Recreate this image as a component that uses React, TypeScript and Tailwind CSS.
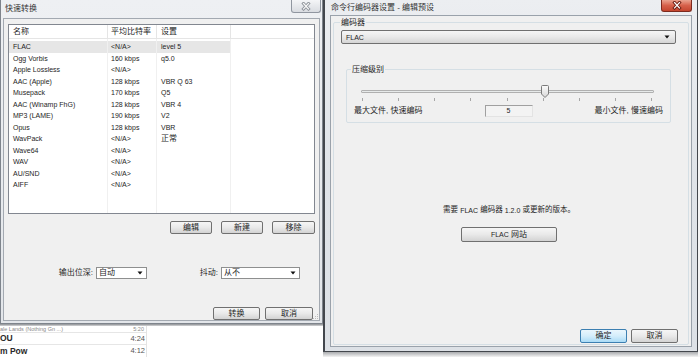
import React from "react";

const rows: [string, string, string][] = [
  ["FLAC", "<N/A>", "level 5"],
  ["Ogg Vorbis", "160 kbps", "q5.0"],
  ["Apple Lossless", "<N/A>", ""],
  ["AAC (Apple)", "128 kbps", "VBR Q 63"],
  ["Musepack", "170 kbps", "Q5"],
  ["AAC (Winamp FhG)", "128 kbps", "VBR 4"],
  ["MP3 (LAME)", "190 kbps", "V2"],
  ["Opus", "128 kbps", "VBR"],
  ["WavPack", "<N/A>", "正常"],
  ["Wave64", "<N/A>", ""],
  ["WAV", "<N/A>", ""],
  ["AU/SND", "<N/A>", ""],
  ["AIFF", "<N/A>", ""],
];

function Arrow() {
  return (
    <svg width="6" height="4" viewBox="0 0 6 4">
      <path d="M0.5 0.5h5L3 3.5z" fill="#111" />
    </svg>
  );
}

function XIcon({ active }: { active: boolean }) {
  return (
    <svg width="10" height="9" viewBox="0 0 10 9">
      <path d="M2.5 1.5l5 5.5M7.5 1.5l-5 5.5" stroke={active ? "#6b1c10" : "#8f949b"} strokeWidth="3" strokeLinecap="square" />
      <path d="M2.5 1.5l5 5.5M7.5 1.5l-5 5.5" stroke={active ? "#ffffff" : "#f8f8f8"} strokeWidth="1.2" strokeLinecap="square" />
    </svg>
  );
}

function Btn({ label, className }: { label: string; className: string }) {
  return (
    <div
      className={
        "flex items-center justify-center rounded-[2px] border border-[#707070] bg-linear-to-b from-[#f6f6f6] via-[#e9e9e9] to-[#d3d3d3] text-[8px] " +
        className
      }
    >
      {label}
    </div>
  );
}

function Select({ label, className }: { label: string; className: string }) {
  return (
    <div className={"flex items-center justify-between h-[12px] border border-[#8e8f8f] bg-white pl-[2px] pr-[3px] text-[8px] " + className}>
      <span>{label}</span>
      <Arrow />
    </div>
  );
}

function LeftWindow() {
  return (
    <div className="w-[323px] h-[327px] flex flex-col border-x border-b border-[#7e848c] bg-linear-to-b from-[#eef0f3] to-[#e3e6ea]">
      <div className="h-[18px] flex items-start justify-between pl-[4px] pr-[1px]">
        <span className="pt-[5px] text-[8px] text-[#333]">快速转换</span>
        <div className="w-[30px] h-[13px] flex items-center justify-center rounded-b-[3px] border-x border-b border-[#9096a0] bg-linear-to-b from-[#f4f5f7] to-[#d9dce1]">
          <XIcon active={false} />
        </div>
      </div>
      <div className="mx-[2px] mb-[2px] flex-1 flex flex-col border border-[#a3a9b1] bg-[#f0f0f0] pl-[4px] pr-[3px] relative">
        <div className="mt-[5px] w-[307px] h-[190px] flex flex-col border border-[#828790] bg-white">
          <div className="h-[14px] flex border-b border-[#e5e5e5] text-[8px]">
            <div className="w-[99px] pl-[4px] flex items-center border-r border-[#e5e5e5]">名称</div>
            <div className="w-[49px] pl-[3px] flex items-center border-r border-[#e5e5e5]">平均比特率</div>
            <div className="w-[74px] pl-[4px] flex items-center border-r border-[#e5e5e5]">设置</div>
            <div className="flex-1" />
          </div>
          <div className="flex-1 flex text-[7px]">
            <div className="w-[99px] pt-[2px] border-r border-[#f0f0f0]">
              {rows.map((r, i) => (
                <div key={i} className={"h-[11.5px] pl-[4px] flex items-center " + (i === 0 ? "bg-[#e6e6e6]" : "")}>
                  {r[0]}
                </div>
              ))}
            </div>
            <div className="w-[49px] pt-[2px] border-r border-[#f0f0f0]">
              {rows.map((r, i) => (
                <div key={i} className={"h-[11.5px] pl-[3px] flex items-center " + (i === 0 ? "bg-[#e6e6e6]" : "")}>
                  {r[1]}
                </div>
              ))}
            </div>
            <div className="w-[74px] pt-[2px] border-r border-[#f0f0f0]">
              {rows.map((r, i) => (
                <div
                  key={i}
                  className={"h-[11.5px] pl-[4px] flex items-center " + (i === 0 ? "bg-[#e6e6e6] " : "") + (r[2] === "正常" ? "text-[8px]" : "")}
                >
                  {r[2]}
                </div>
              ))}
            </div>
            <div className="flex-1" />
          </div>
        </div>
        <div className="mt-[7px] w-[307px] flex justify-end gap-[9px]">
          <Btn label="编辑" className="w-[42px] h-[13px]" />
          <Btn label="新建" className="w-[42px] h-[13px]" />
          <Btn label="移除" className="w-[43px] h-[13px]" />
        </div>
        <div className="mt-[33px] flex text-[8px]">
          <div className="w-[139px] flex items-center justify-end gap-[3px]">
            <span>输出位深:</span>
            <Select label="自动" className="w-[51px]" />
          </div>
          <div className="w-[153px] flex items-center justify-end gap-[3px]">
            <span>抖动:</span>
            <Select label="从不" className="w-[79px]" />
          </div>
        </div>
        <div className="mt-[28px] w-[305px] flex justify-end gap-[5px]">
          <Btn label="转换" className="w-[47px] h-[13px]" />
          <Btn label="取消" className="w-[48px] h-[13px]" />
        </div>
        <div className="absolute right-[1px] bottom-[1px] w-[5px] h-[5px] grid grid-cols-3 gap-[0.5px] opacity-60">
          <span />
          <span />
          <span className="bg-[#999]" />
          <span />
          <span className="bg-[#999]" />
          <span className="bg-[#999]" />
          <span className="bg-[#999]" />
          <span className="bg-[#999]" />
          <span className="bg-[#999]" />
        </div>
      </div>
    </div>
  );
}

function BgList() {
  return (
    <div className="flex-1 flex flex-col bg-white">
      <div className="h-[2px] bg-linear-to-b from-[#8a8d91] to-[#d6d7d9]" />
      <div className="w-[147px] flex flex-col border-r border-[#e3e3e3]">
        <div className="h-[7px] flex items-center justify-between pr-[2px] border-b border-[#e6e6e6] text-[5.5px] leading-[6px] text-[#8a8a8a]">
          <span>ale Lands (Nothing Gn ...)</span>
          <span>5:20</span>
        </div>
        <div className="h-[12px] flex items-center justify-between pr-[1px] border-b border-[#e6e6e6]">
          <span className="text-[8.5px] font-semibold text-[#2a2a2a]">OU</span>
          <span className="text-[7.5px] text-[#555]">4:24</span>
        </div>
        <div className="h-[12px] flex items-center justify-between pr-[1px]">
          <span className="text-[8.5px] font-semibold text-[#2a2a2a]">m Pow</span>
          <span className="text-[7.5px] text-[#555]">4:12</span>
        </div>
      </div>
    </div>
  );
}

function RightWindow() {
  const ticks = [0, 1, 2, 3, 4, 5, 6, 7, 8];
  return (
    <div className="w-[375px] h-[352px] flex flex-col border-l-2 border-r border-b border-[#43474d] bg-linear-to-b from-[#eceef1] via-[#dfe3e8] to-[#dde1e6]">
      <div className="h-[15px] flex items-start justify-between pl-[6px] pr-[5px]">
        <span className="pt-[4px] text-[8px] text-[#333]">命令行编码器设置 - 编辑预设</span>
        <div className="w-[31px] h-[12px] flex items-center justify-center rounded-b-[3px] border-x border-b border-[#7d2a1e] bg-linear-to-b from-[#e9a28f] via-[#d6604a] to-[#c4452e]">
          <XIcon active={true} />
        </div>
      </div>
      <div className="mx-[5px] mb-[4px] flex-1 flex flex-col border border-[#9aa2ab] bg-[#f0f0f0] px-[2px] pb-[1px]">
        <div className="mt-[6px] flex-1 flex flex-col border border-[#d5dfe5] rounded-[2px] relative">
          <span className="absolute -top-[5px] left-[6px] px-[1px] bg-[#f0f0f0] text-[8px] leading-[9px]">编码器</span>
          <div className="mt-[7px] ml-[7px] w-[335px] h-[14px] flex items-center justify-between rounded-[2px] border border-[#707070] bg-linear-to-b from-[#f6f6f6] via-[#e9e9e9] to-[#d5d5d5] pl-[4px] pr-[5px] text-[7px]">
            <span>FLAC</span>
            <Arrow />
          </div>
          <div className="mt-[25px] ml-[12px] w-[325px] h-[54px] flex flex-col border border-[#d5dfe5] rounded-[2px] relative">
            <span className="absolute -top-[5px] left-[4px] px-[1px] bg-[#f0f0f0] text-[8px] leading-[9px]">压缩级别</span>
            <div className="mt-[20px] ml-[14px] w-[293px] h-[3px] border border-[#b0b0b0] bg-[#e7eaea] rounded-[1px] relative">
              <svg className="absolute left-[179px] -top-[6px]" width="8" height="13" viewBox="0 0 8 13">
                <defs>
                  <linearGradient id="tg" x1="0" y1="0" x2="0" y2="1">
                    <stop offset="0" stopColor="#fbfbfb" />
                    <stop offset="1" stopColor="#d8d8d8" />
                  </linearGradient>
                </defs>
                <path d="M1.5 0.5h5a1 1 0 0 1 1 1v7.5l-3.5 3.5l-3.5-3.5v-7.5a1 1 0 0 1 1-1z" fill="url(#tg)" stroke="#7b7b7b" />
              </svg>
            </div>
            <div className="mt-[5px] ml-[15px] w-[290px] h-[3px] flex justify-between">
              {ticks.map((t) => (
                <span key={t} className="w-[1px] h-[3px] bg-[#a6a6a6]" />
              ))}
            </div>
            <div className="mt-[3px] mx-[7px] h-[13px] flex items-center justify-between text-[8px]">
              <span>最大文件, 快速编码</span>
              <div className="w-[48px] h-[12px] flex items-center justify-center border border-[#a0a0a0] border-r-[#e3e3e3] border-b-[#e3e3e3] bg-[#f3f3f3] text-[7px]">
                5
              </div>
              <span>最小文件, 慢速编码</span>
            </div>
          </div>
          <div className="mt-[82px] pr-[4px] flex flex-col items-center">
            <span className="h-[10px] flex items-center text-[7.5px]">
              需要&nbsp;<span className="text-[7px]">FLAC</span>&nbsp;编码器&nbsp;<span className="text-[7px]">1.2.0</span>&nbsp;或更新的版本。
            </span>
            <div className="mt-[12px] w-[96px] h-[15px] flex items-center justify-center rounded-[2px] border border-[#707070] bg-linear-to-b from-[#f6f6f6] via-[#e9e9e9] to-[#d3d3d3]">
              <span className="text-[7px]">FLAC</span>
              <span className="text-[8px]">&nbsp;网站</span>
            </div>
          </div>
          <div className="mt-auto mb-[1px] mr-[10px] flex justify-end gap-[4px]">
            <div className="w-[47px] h-[14px] flex items-center justify-center rounded-[2px] border border-[#3c7fb1] bg-linear-to-b from-[#eaf6fd] via-[#d4edfb] to-[#a9dbf6] text-[8px]">
              确定
            </div>
            <Btn label="取消" className="w-[47px] h-[14px]" />
          </div>
        </div>
      </div>
    </div>
  );
}

export default function App() {
  return (
    <div className="w-[700px] h-[357px] overflow-hidden flex bg-[#f2f2f2] text-[#1e1e1e] leading-none font-['Liberation_Sans','Noto_Sans_CJK_SC',sans-serif]">
      <div className="w-[323px] flex flex-col">
        <LeftWindow />
        <BgList />
      </div>
      <div className="flex flex-col">
        <RightWindow />
        <div className="flex-1 bg-linear-to-b from-[#a9abae] to-[#f4f4f4]" />
      </div>
      <div className="flex-1 bg-[#f5f5f5]" />
    </div>
  );
}
